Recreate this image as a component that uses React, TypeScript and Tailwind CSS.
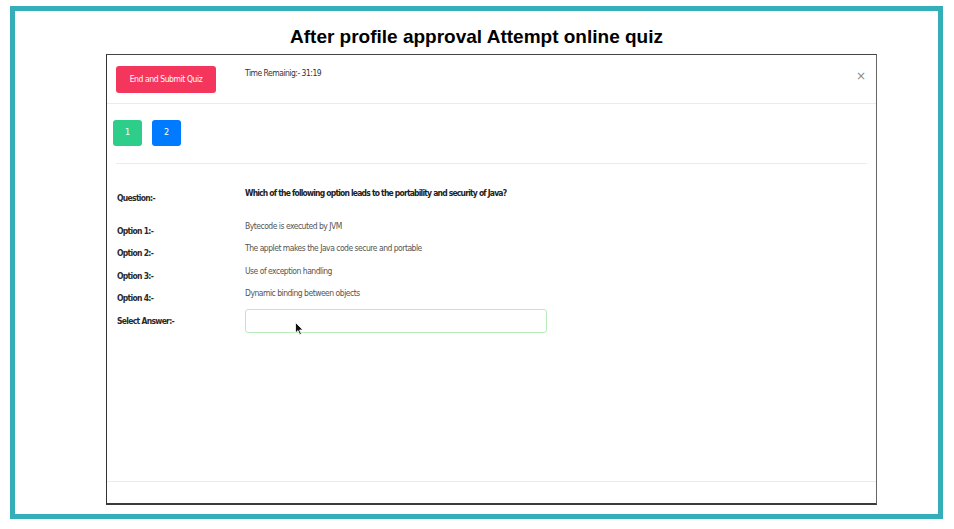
import React from "react";

const narrow = { fontFamily: '"DejaVu Sans Condensed", "Liberation Sans", sans-serif' };

const options = [
  { label: "Option 1:-", text: "Bytecode is executed by JVM", mt: "mt-[16px]" },
  { label: "Option 2:-", text: "The applet makes the Java code secure and portable", mt: "mt-[5px]" },
  { label: "Option 3:-", text: "Use of exception handling", mt: "mt-[6px]" },
  { label: "Option 4:-", text: "Dynamic binding between objects", mt: "mt-[5px]" },
];

function Row({ label, children, className = "" }: { label: string; children: React.ReactNode; className?: string }) {
  return (
    <div className={`flex items-start ${className}`}>
      <div className="w-[128px] mt-[5px] text-[8.5px] leading-[12px] font-bold tracking-[-0.7px] text-[#2a2a2a]">{label}</div>
      <div className="text-[8.5px] leading-[12px] tracking-[-0.5px] text-[#555]">{children}</div>
    </div>
  );
}

function Cursor() {
  return (
    <svg className="absolute left-[295px] top-[322px]" width="9" height="14" viewBox="0 0 9 14">
      <path d="M0.5 0.5 L0.5 11 L3 8.6 L4.8 12.8 L6.4 12.1 L4.6 8 L8 8 Z" fill="#111" stroke="#fff" strokeWidth="0.8" />
    </svg>
  );
}

export default function App() {
  return (
    <div className="relative w-[954px] h-[529px] bg-white" style={narrow}>
      <div className="ml-[10px] pt-[6px]">
        <div className="w-[933px] h-[513px] border-[5px] border-[#34aeb8] bg-white">
          <h1
            className="pt-[14px] text-center text-[19px] leading-[23px] font-bold text-black"
            style={{ fontFamily: '"Liberation Sans", Arial, sans-serif' }}
          >
            After profile approval Attempt online quiz
          </h1>

          {/* modal */}
          <div className="ml-[91px] mt-[6px] w-[771px] h-[451px] flex flex-col border border-[#333] border-t-[#444] border-b-2 border-b-[#3a3a3a] border-r-[#666] bg-white">
            <div className="flex items-start border-b border-[#e9ecef] pl-[9px] pr-[9px] pt-[11px] pb-[10px]">
              <button className="w-[100px] h-[27px] rounded-[3px] bg-[#f5365c] text-white text-[8.5px] tracking-[-0.4px]">
                End and Submit Quiz
              </button>
              <div className="ml-[29px] mt-[1px] text-[8.5px] leading-[12px] tracking-[-0.5px] text-[#333]">Time Remainig:- 31:19</div>
              <div
                className="ml-auto mr-[1px] mt-[4px] text-[12px] leading-[12px] text-[#8a8a8a]"
                style={{ fontFamily: '"DejaVu Sans", sans-serif' }}
              >
                ×
              </div>
            </div>

            <div className="flex-1">
              <div className="flex gap-[10px] pl-[6px] pt-[16px]">
                <div className="w-[29px] h-[26px] rounded-[3px] bg-[#2dce89] text-white text-[9px] flex items-center justify-center">1</div>
                <div className="w-[29px] h-[26px] rounded-[3px] bg-[#007bff] text-white text-[9px] flex items-center justify-center">2</div>
              </div>
              <div className="mx-[9px] mt-[17px] border-t border-[#e9ecef]" />

              <div className="pl-[10px] pt-[23px]">
                <Row label="Question:-">
                  <span className="font-bold tracking-[-0.8px] text-[#222]">
                    Which of the following option leads to the portability and security of Java?
                  </span>
                </Row>
                {options.map((o) => (
                  <Row key={o.label} label={o.label} className={o.mt}>
                    {o.text}
                  </Row>
                ))}
                <div className="flex items-start mt-[5px]">
                  <div className="w-[128px] mt-[6px] text-[8.5px] leading-[12px] font-bold tracking-[-0.7px] text-[#2a2a2a]">
                    Select Answer:-
                  </div>
                  <div className="w-[302px] h-[24px] rounded-[3px] border border-[#b9eebb] bg-white" />
                </div>
              </div>
            </div>

            <div className="h-[22px] border-t border-[#e9ecef]" />
          </div>
        </div>
      </div>
      <Cursor />
    </div>
  );
}
